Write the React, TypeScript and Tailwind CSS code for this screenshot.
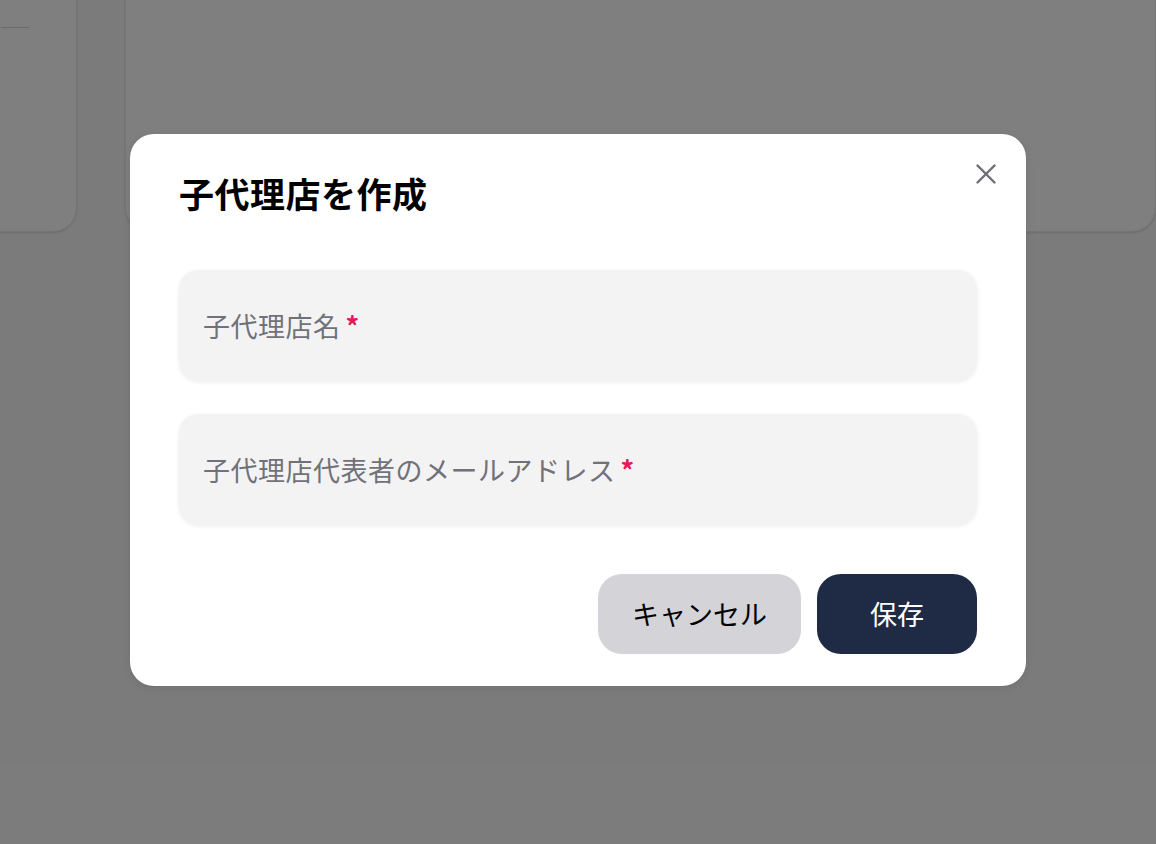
import React from 'react';
import { X } from 'lucide-react';

const font = { fontFamily: '"Noto Sans CJK JP", "Noto Sans", sans-serif' };

function Field({ label }: { label: string }) {
  return (
    <div className="h-[111px] w-full rounded-[20px] bg-[#f3f3f4] shadow-[0_1px_4px_rgba(0,0,0,0.08)] px-6 flex items-center">
      <span className="text-[27px] leading-none text-[#71717a] tracking-[0.5px]">
        {label}
        <span className="ml-[5px] text-[#e6195e] font-bold">*</span>
      </span>
    </div>
  );
}

export default function App() {
  return (
    <div className="relative w-[1156px] h-[844px] overflow-hidden bg-[#f7f7f7]" style={font}>
      {/* page behind the dialog */}
      <div className="flex gap-12 -mt-10">
        <div className="w-[110px] -ml-[33px] h-[272px] shrink-0 rounded-3xl bg-white border border-[#e8e8e8] shadow-sm pt-[66px]">
          <div className="h-px w-[28px] ml-[33px] bg-[#d8d8d8]" />
        </div>
        <div className="flex-1 h-[272px] rounded-3xl bg-white border border-[#e8e8e8] shadow-sm" />
      </div>

      {/* overlay */}
      <div className="absolute inset-0 bg-black/50 flex items-center justify-center pb-6">
        <div className="relative w-[896px] rounded-3xl bg-white shadow-[0_2px_10px_rgba(0,0,0,0.08)] px-[49px] pt-[32px] pb-[32px]">
          <button className="absolute right-[23px] top-[23px] text-[#6e6e76]">
            <X size={34} strokeWidth={1.7} />
          </button>
          <h2 className="text-[35px] font-bold leading-[54px] text-black tracking-[0.5px]">子代理店を作成</h2>
          <div className="mt-[50px] flex flex-col gap-[33px]">
            <Field label="子代理店名" />
            <Field label="子代理店代表者のメールアドレス" />
          </div>
          <div className="mt-[49px] flex justify-end gap-4">
            <button className="h-20 w-[203px] rounded-3xl bg-[#d4d4d8] text-[27px] text-black">キャンセル</button>
            <button className="h-20 w-[160px] rounded-3xl bg-[#1f2a44] text-[27px] text-white">保存</button>
          </div>
        </div>
      </div>
    </div>
  );
}
